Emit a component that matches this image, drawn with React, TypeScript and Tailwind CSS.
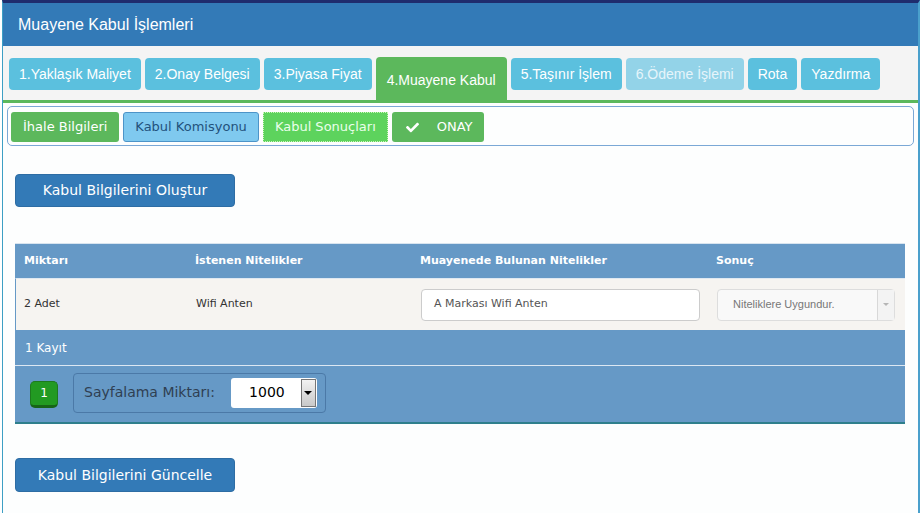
import { FaCheck } from 'react-icons/fa';

const tabs = [
  { label: '1.Yaklaşık Maliyet', state: 'normal' },
  { label: '2.Onay Belgesi', state: 'normal' },
  { label: '3.Piyasa Fiyat', state: 'normal' },
  { label: '4.Muayene Kabul', state: 'active' },
  { label: '5.Taşınır İşlem', state: 'normal' },
  { label: '6.Ödeme İşlemi', state: 'disabled' },
  { label: 'Rota', state: 'normal' },
  { label: 'Yazdırma', state: 'normal' },
];

const verdana = "font-['DejaVu_Sans',Verdana,sans-serif]";

export default function App() {
  return (
    <div className="w-[923px] h-[513px] bg-white overflow-hidden font-['Liberation_Sans',Arial,sans-serif]">
      <div className="ml-[2px] w-[918px] h-[513px] border-l border-r-2 border-t-[3px] border-l-[#3d9fc4] border-r-[#4aa0cc] border-t-[#1f2c6e] bg-[#fdfefe]">
        {/* header */}
        <div className="h-[43px] bg-[#337ab7] flex items-center pl-[15px]">
          <h1 className="text-white text-[16px]">Muayene Kabul İşlemleri</h1>
        </div>

        {/* main tabs */}
        <div className="h-[57px] bg-[#f4f4f4] border-b-[3px] border-[#5cb85c] flex items-start gap-[4px] pl-[6px] pt-[12px]">
          {tabs.map((t) =>
            t.state === 'active' ? (
              <div
                key={t.label}
                className="h-[43px] -mt-[1px] bg-[#5cb85c] rounded-t-[4px] px-[11px] pt-[15px] text-white text-[14px] leading-[16px]"
              >
                {t.label}
              </div>
            ) : (
              <div
                key={t.label}
                className={
                  t.state === 'disabled'
                    ? 'h-[32px] bg-[#93d3e8] rounded-[4px] px-[10px] flex items-center text-[#e6f5fb] text-[14px]'
                    : 'h-[32px] bg-[#5bc0de] rounded-[4px] px-[10px] flex items-center text-white text-[14px]'
                }
              >
                {t.label}
              </div>
            )
          )}
        </div>

        {/* sub tabs */}
        <div className={`mx-[4px] mt-[3px] h-[40px] border border-[#7ba8d6] rounded-[5px] flex items-start gap-[4px] pl-[3px] pt-[5px] ${verdana}`}>
          <div className="h-[30px] bg-[#5cb85c] rounded-[3px] px-[12px] flex items-center text-white text-[13px]">İhale Bilgileri</div>
          <div className="h-[30px] bg-[#7fc9ef] border border-[#4d94c8] rounded-[3px] px-[11px] flex items-center text-[#23527c] text-[13px]">
            Kabul Komisyonu
          </div>
          <div className="h-[30px] bg-[#5dd35d] border border-dotted border-[#c9f7b8] px-[11px] flex items-center text-[#eaffea] text-[13px]">
            Kabul Sonuçları
          </div>
          <div className="h-[30px] w-[92px] bg-[#5cb85c] rounded-[3px] pl-[14px] flex items-center gap-[18px] text-white text-[13px]">
            <FaCheck className="w-[13px] h-[13px]" />
            <span>ONAY</span>
          </div>
        </div>

        {/* create button */}
        <div className="pl-[12px] pt-[28px]">
          <button className={`w-[220px] h-[33px] bg-[#337ab7] rounded-[4px] border border-[#2e6da4] text-white text-[14px] ${verdana}`}>
            Kabul Bilgilerini Oluştur
          </button>
        </div>

        {/* table */}
        <div className={`ml-[12px] mt-[36px] w-[890px] ${verdana}`}>
          <div className="grid grid-cols-[171px_225px_296px_198px] h-[35px] items-center bg-[#6699c6] text-white text-[11px] font-bold border-t border-[#d8e4ef]">
            <div className="pl-[9px]">Miktarı</div>
            <div className="pl-[9px]">İstenen Nitelikler</div>
            <div className="pl-[9px]">Muayenede Bulunan Nitelikler</div>
            <div className="pl-[9px]">Sonuç</div>
          </div>
          <div className="grid grid-cols-[171px_225px_296px_198px] h-[52px] items-center bg-[#f6f4f1] text-[#333] text-[11px] border-t border-[#dfe8f1] border-l border-l-[#6699c6]">
            <div className="pl-[8px]">2 Adet</div>
            <div className="pl-[9px]">Wifi Anten</div>
            <div className="pl-[9px]">
              <div className="w-[279px] h-[32px] bg-white border border-[#cccccc] rounded-[4px] flex items-center pl-[12px] text-[#555] text-[11px]">
                A Markası Wifi Anten
              </div>
            </div>
            <div className="pl-[9px]">
              <div className="w-[178px] h-[32px] bg-[#f9f9f9] border border-[#dddddd] rounded-[4px] flex items-center justify-between pl-[15px] text-[#777] font-['Liberation_Sans',Tahoma,sans-serif]">
                <span className="text-[11px]">Niteliklere Uygundur.</span>
                <div className="w-[17px] h-[30px] border-l border-[#d8d8d8] bg-[#f3f3f3] flex items-center justify-center">
                  <div className="w-0 h-0 border-l-[3px] border-r-[3px] border-t-[3px] border-l-transparent border-r-transparent border-t-[#b5b5b5]" />
                </div>
              </div>
            </div>
          </div>
          <div className="h-[36px] bg-[#6699c6] border-b border-[#dce7f2] flex items-center pl-[10px] text-white text-[12px]">1 Kayıt</div>
          <div className="h-[58px] bg-[#6699c6] border-b-2 border-[#2e7f8c] flex items-center pl-[15px] gap-[15px]">
            <div className="w-[28px] h-[27px] bg-[#229a22] border border-[#1d7a1d] border-b-[3px] border-b-[#176417] rounded-[5px] flex items-center justify-center text-white text-[12px]">
              1
            </div>
            <div className="w-[253px] h-[40px] border border-[#4b79a7] rounded-[4px] flex items-center pl-[10px] gap-[16px] -mt-[3px]">
              <span className="text-[#2f3f52] text-[14px]">Sayfalama Miktarı:</span>
              <div className="w-[86px] h-[30px] bg-white rounded-[3px] flex items-center">
                <span className="flex-1 text-center text-black text-[14px] pl-[2px]">1000</span>
                <div className="w-[15px] h-[28px] mr-[1px] border border-[#777] bg-gradient-to-b from-[#f2f2f2] to-[#c9c9c9] flex items-center justify-center">
                  <div className="w-0 h-0 border-l-[4px] border-r-[4px] border-t-[4px] border-l-transparent border-r-transparent border-t-black" />
                </div>
              </div>
            </div>
          </div>
        </div>

        {/* update button */}
        <div className="pl-[12px] pt-[34px]">
          <button className={`w-[220px] h-[34px] bg-[#337ab7] rounded-[4px] border border-[#2e6da4] text-white text-[14px] ${verdana}`}>
            Kabul Bilgilerini Güncelle
          </button>
        </div>
      </div>
    </div>
  );
}
